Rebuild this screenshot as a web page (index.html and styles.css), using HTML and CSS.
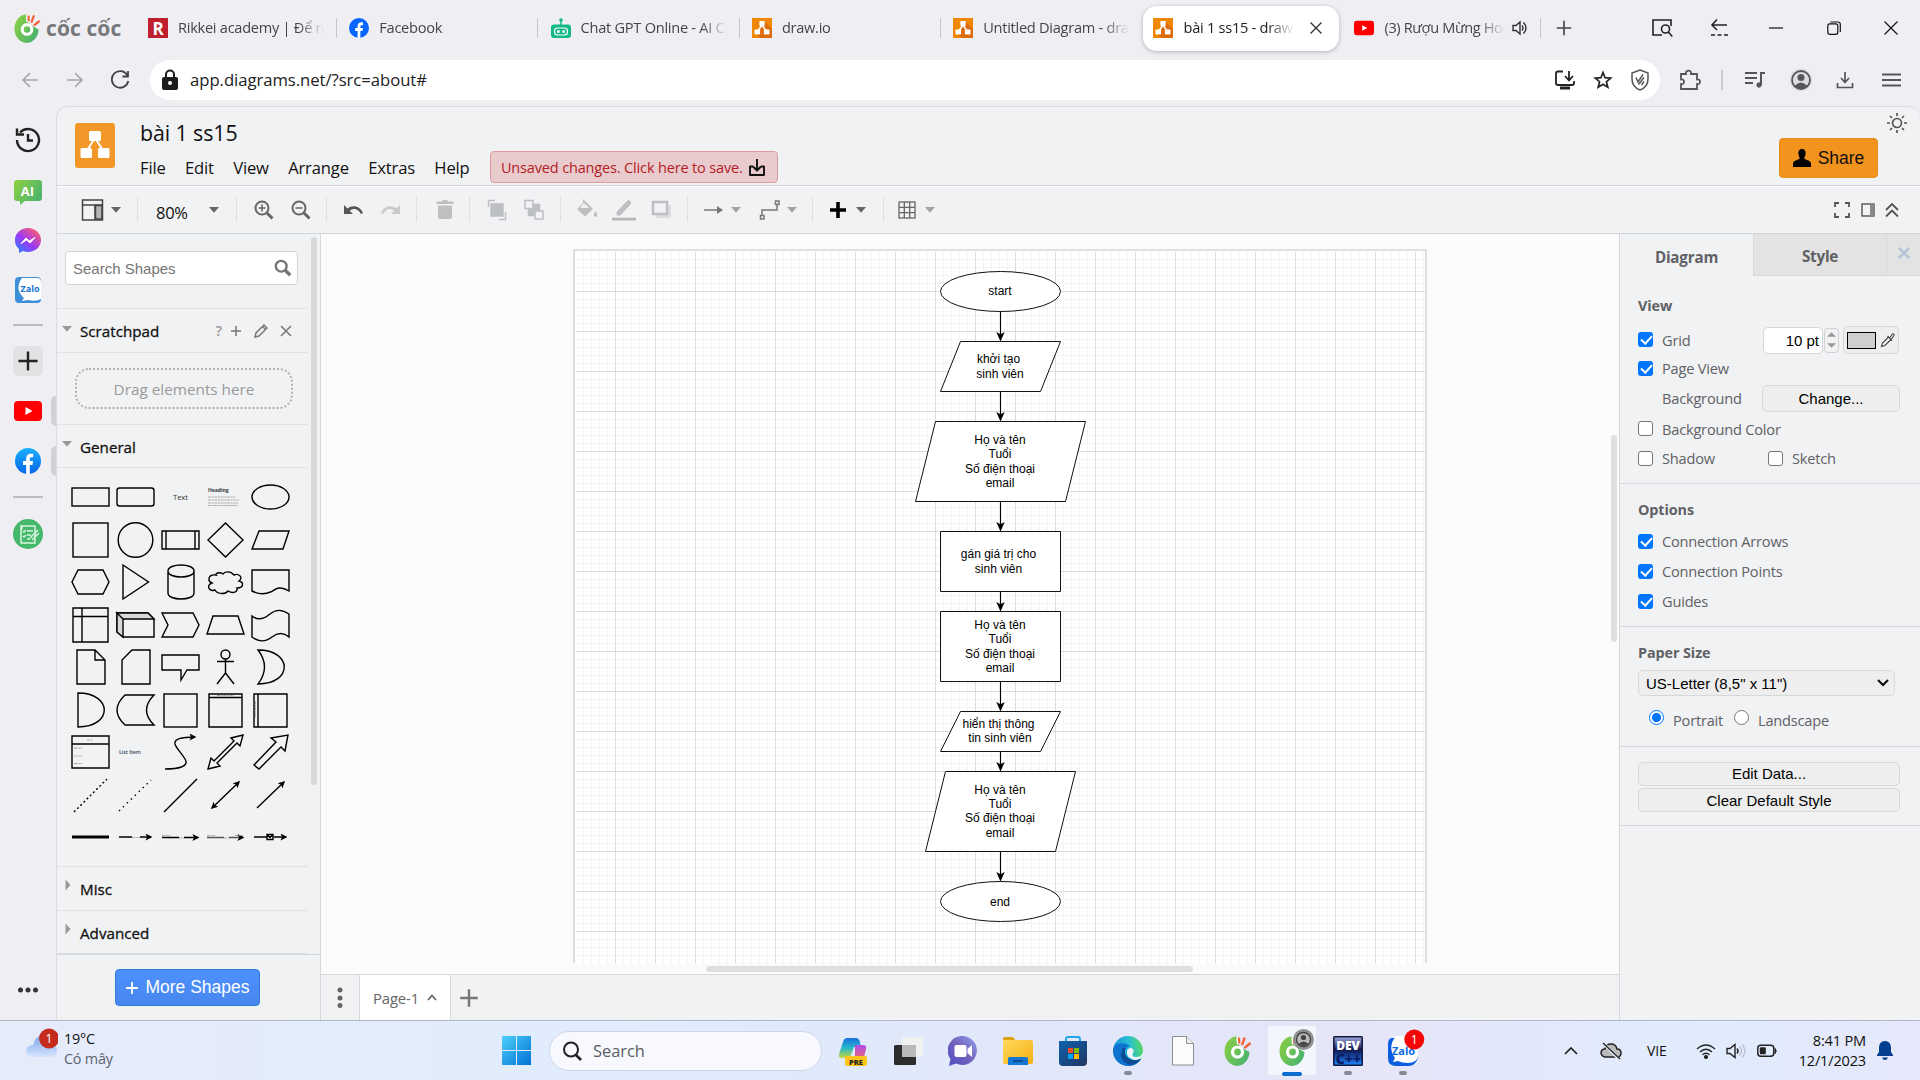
FILE: index.html
```html
<!DOCTYPE html>
<html lang="vi">
<head>
<meta charset="utf-8">
<title>bài 1 ss15 - draw.io</title>
<link rel="stylesheet" href="styles.css">
</head>
<body>
<svg class="defs" width="0" height="0" aria-hidden="true">
  <defs>
    <linearGradient id="gGreen" x1="0" y1="0" x2="1" y2="0.6"><stop offset="0" stop-color="#8fd040"/><stop offset="1" stop-color="#4bb56c"/></linearGradient>
    <linearGradient id="gMsg" x1="0" y1="1" x2="0.8" y2="0"><stop offset="0" stop-color="#1a8cff"/><stop offset="0.5" stop-color="#9b38f5"/><stop offset="1" stop-color="#ff5f70"/></linearGradient>
    <linearGradient id="gWin" x1="0" y1="0" x2="1" y2="1"><stop offset="0" stop-color="#4fd0fc"/><stop offset="1" stop-color="#0070d4"/></linearGradient>
    <linearGradient id="gFb" x1="0" y1="0" x2="0" y2="1"><stop offset="0" stop-color="#19b0ff"/><stop offset="1" stop-color="#0866e8"/></linearGradient>
    <linearGradient id="gCloud" x1="0" y1="0" x2="0" y2="1"><stop offset="0" stop-color="#7fa9ee"/><stop offset="1" stop-color="#d5e4fb"/></linearGradient>
    <linearGradient id="gEdge" x1="0" y1="0.2" x2="1" y2="0"><stop offset="0" stop-color="#1689d8"/><stop offset="0.5" stop-color="#28bfd6"/><stop offset="1" stop-color="#62dc4a"/></linearGradient>
    <linearGradient id="gFolder" x1="0" y1="0" x2="1" y2="1"><stop offset="0" stop-color="#ffd95e"/><stop offset="1" stop-color="#f6b010"/></linearGradient>
    <linearGradient id="gChat" x1="0" y1="1" x2="1" y2="0"><stop offset="0" stop-color="#4b4fc4"/><stop offset="0.5" stop-color="#7462bb"/><stop offset="1" stop-color="#8ea2f0"/></linearGradient>
    <linearGradient id="gStore" x1="0" y1="0" x2="1" y2="1"><stop offset="0" stop-color="#0c62ae"/><stop offset="1" stop-color="#233463"/></linearGradient>
    <linearGradient id="gCop1" x1="0" y1="0" x2="0" y2="1"><stop offset="0" stop-color="#1b6fe0"/><stop offset="0.5" stop-color="#25b8c8"/><stop offset="1" stop-color="#c9d83c"/></linearGradient>
    <linearGradient id="gCop2" x1="0" y1="0" x2="0" y2="1"><stop offset="0" stop-color="#b14df0"/><stop offset="1" stop-color="#f0685c"/></linearGradient>
    <linearGradient id="gDev" x1="0" y1="0" x2="0" y2="1"><stop offset="0" stop-color="#9aa4d8"/><stop offset="0.45" stop-color="#10164e"/><stop offset="1" stop-color="#1f7ff5"/></linearGradient>
    <symbol id="drawio" viewBox="0 0 20 20"><path d="M0 0H20V20H0z" fill="#f08705"/><path d="M12.5 3.5 20 11V20H8.500L4 15.500z" fill="#df6c0c"/><path d="M10 7 5.500 13.500M10 7l4.500 6.500" stroke="#fff" stroke-width="1.500"/><rect x="7.300" y="3" width="5.400" height="5" rx=".8" fill="#fff"/><rect x="2.500" y="11.500" width="5.600" height="5" rx=".8" fill="#fff"/><rect x="11.900" y="11.500" width="5.600" height="5" rx=".8" fill="#fff"/></symbol>
    <symbol id="youtube" viewBox="0 0 28 20"><rect width="28" height="20" rx="4" fill="#f00"/><path d="M11.500 6v8l7-4z" fill="#fff"/></symbol>
    <symbol id="facebook" viewBox="0 0 24 24"><circle cx="12" cy="12" r="12" fill="inherit"/><path d="M10.300 24v-8.300H7.400V12h2.900v-1.700c0-3.700 1.800-5.100 4.500-5.100.9 0 1.500.1 2 .2v3.200h-1.400c-1.400 0-1.800.6-1.800 1.800V12h3.100l-.6 3.700h-2.500V24z" fill="#fff"/></symbol>
    <symbol id="coccoc" viewBox="0 0 28 32"><path d="M13 1.500A12.500 14.700 0 1 0 25.500 17L20 14 14 9z" fill="url(#gGreen)"/><circle cx="13.500" cy="17" r="5" fill="url(#gGreen)" stroke="#fff" stroke-width="3.200"/><path d="M14.300 2 14.800 9" stroke="#fff" stroke-width="4"/><path d="M15 2.500 15.300 8.500M20.800 2.500 18 10M26.500 8 20.500 13" stroke="#f4623a" stroke-width="2.300"/></symbol>
    <symbol id="caret" viewBox="0 0 12 8"><path d="M1 1h10L6 6.800z" fill="currentColor"/></symbol>
    <symbol id="plus" viewBox="0 0 20 20"><path d="M10 2v16M2 10h16" stroke="currentColor" fill="none" stroke-width="inherit"/></symbol>
    <symbol id="search" viewBox="0 0 20 20"><circle cx="8" cy="8" r="6" fill="none" stroke="currentColor" stroke-width="2.600"/><path d="m12.500 12.500 5.500 5.500" stroke="currentColor" stroke-width="3.800"/></symbol>
    <symbol id="zalo" viewBox="0 0 28 28"><rect x="1" y="1" width="26" height="26" rx="4" fill="#3d8fd8"/><path d="M8 2h15q4 0 4 4v17q-5 3-13 1l-6 1 2-3Q0 13 8 2z" fill="#fff"/></symbol>
    <marker id="arrow" viewBox="0 0 10 10" refX="8.500" refY="5" markerWidth="10" markerHeight="10" markerUnits="userSpaceOnUse" orient="auto"><path d="M0 .8 9.500 5 0 9.200 2.200 5z"/></marker>
    <marker id="arrowS" viewBox="0 0 10 10" refX="8" refY="5" markerWidth="7" markerHeight="7" markerUnits="userSpaceOnUse" orient="auto-start-reverse"><path d="M0 0 10 5 0 10 2.500 5z"/></marker>
  </defs>
</svg>

<header class="tabstrip">
  <div class="brand">
    <svg width="27" height="31"><use href="#coccoc"/></svg>
    <span class="brand-name">cốc cốc</span>
  </div>
  <div class="tab"><svg class="fav" viewBox="0 0 20 20"><rect width="20" height="20" fill="#bd1f2d"/><text x="10" y="16.500" text-anchor="middle" class="fav-r">R</text></svg><span class="tab-title">Rikkei academy | Để nuôi</span></div>
  <div class="tab"><svg class="fav fb-flat"><use href="#facebook"/></svg><span class="tab-title">Facebook</span></div>
  <div class="tab"><svg class="fav" viewBox="0 0 20 20"><path d="M10 3v5" stroke="#12b886" stroke-width="1.500"/><circle cx="10" cy="2" r="1.800" fill="#12b886"/><rect y="6.500" width="20" height="13.500" rx="3" fill="#12b886"/><rect x="3.500" y="10" width="13" height="7" rx="3" fill="none" stroke="#fff" stroke-width="1.200"/><circle cx="7.300" cy="13.400" r="1.500" fill="#fff"/><circle cx="12.700" cy="13.400" r="1.500" fill="#fff"/></svg><span class="tab-title">Chat GPT Online - AI Chat</span></div>
  <div class="tab"><svg class="fav"><use href="#drawio"/></svg><span class="tab-title">draw.io</span></div>
  <div class="tab no-sep"><svg class="fav"><use href="#drawio"/></svg><span class="tab-title">Untitled Diagram - draw.io</span></div>
  <div class="tab active"><svg class="fav"><use href="#drawio"/></svg><span class="tab-title">bài 1 ss15 - draw.io</span><svg class="tab-close" width="14" height="14" viewBox="0 0 14 14"><path d="m1.500 1.500 11 11m0-11-11 11" stroke="#333" stroke-width="1.400"/></svg></div>
  <div class="tab last"><svg class="fav" ><use href="#youtube"/></svg><span class="tab-title">(3) Rượu Mừng Hoá</span><svg width="16" height="16" viewBox="0 0 16 16" fill="none" stroke="#333" stroke-width="1.400"><path d="M1 5.500h3L8 2v12l-4-3.500H1zM10 5.500q2 2.500 0 5M11.500 2.500q5 5.500 0 11"/></svg></div>
  <svg class="newtab" width="18" height="18"><use href="#plus"/></svg>
  <div class="winctl">
    <svg width="24" height="24" viewBox="0 0 24 24" fill="none" stroke="#222" stroke-width="1.600"><path d="M12 19H3V4h18v6"/><circle cx="15.500" cy="13" r="4"/><path d="m18.300 16 4 4.500"/></svg>
    <svg width="20" height="20" viewBox="0 0 20 20" fill="none" stroke="#222" stroke-width="1.600"><path d="M18 7H3m5-5.500L3 7l5 5"/><path d="M2 17h17" stroke-dasharray="4 2.500"/></svg>
    <svg width="14" height="14" viewBox="0 0 14 14"><path d="M0 7h14" stroke="#111" stroke-width="1.200"/></svg>
    <svg width="14" height="14" viewBox="0 0 14 14" fill="none" stroke="#111" stroke-width="1.200"><rect x=".8" y="2.800" width="10" height="10.500" rx="2"/><path d="M3.500 1H11q2.300 0 2.300 2.300V11"/></svg>
    <svg width="14" height="14" viewBox="0 0 14 14"><path d="m.5.5 13 13m0-13-13 13" stroke="#111" stroke-width="1.200"/></svg>
  </div>
</header>

<nav class="addressbar">
  <svg width="18" height="18" viewBox="0 0 18 18" class="nav-dim"><path d="M17 9H2m7-7L2 9l7 7"/></svg>
  <svg width="18" height="18" viewBox="0 0 18 18" class="nav-dim"><path d="M1 9h15M9 2l7 7-7 7"/></svg>
  <svg width="20" height="20" viewBox="0 0 20 20" class="nav-dark"><path d="M17.500 5.500A8.300 8.300 0 1 0 18.300 11M18 1v5.500h-5.500"/></svg>
  <div class="omnibox">
    <svg width="18" height="22" viewBox="0 0 18 22"><rect x="1" y="8" width="16" height="13" rx="2" fill="#1d1d20"/><path d="M5 8V5.500a4 4 0 0 1 8 0V8" fill="none" stroke="#1d1d20" stroke-width="2"/><circle cx="9" cy="14" r="2" fill="#fff"/></svg>
    <span class="url">app.diagrams.net/?src=about#</span>
    <svg width="22" height="20" viewBox="0 0 22 20" fill="none" stroke="#222" stroke-width="1.800"><path d="M9 1.500H4q-2 0-2 2V13q0 2 2 2h14q2 0 2-2v-2M15 1v9m-4-4 4 4.500L19 6"/><path d="M6 18h10" stroke-width="3"/></svg>
    <svg width="20" height="20" viewBox="0 0 20 20"><path d="m10 2.500 2.100 5.200 5.600.4-4.300 3.600 1.400 5.500L10 14.200l-4.800 3 1.400-5.500-4.300-3.600 5.600-.4z" fill="none" stroke="#222" stroke-width="1.700"/></svg>
    <svg width="20" height="22" viewBox="0 0 20 22" fill="none" stroke="#555" stroke-width="1.500"><path d="m10 1 8 3v6c0 6-4 9.500-8 11-4-1.500-8-5-8-11V4z"/><path d="m6 8.500 2 4.500 5-7.500M8.500 15.500l5.500-7M11.500 16l2.500-3.500"/></svg>
  </div>
  <div class="ext">
    <svg width="22" height="22" viewBox="0 0 22 22" fill="none" stroke="#55565c" stroke-width="1.800"><path d="M2 5h5c-1-4.500 6-4.500 5 0h6v5.500c4-1 4 5.500 0 4.500v5H2v-5c4 1 4-5.500 0-4.500z"/></svg>
    <i class="ext-sep"></i>
    <svg width="20" height="18" viewBox="0 0 20 18" fill="none" stroke="#55565c" stroke-width="2"><path d="M0 2h12M0 7h12M0 12h8M16 14V2h4"/><circle cx="14" cy="14" r="2.200" fill="#55565c" stroke-width="1"/></svg>
    <svg width="24" height="24" viewBox="0 0 24 24"><circle cx="12" cy="12" r="11.500" fill="#e3e3e7"/><circle cx="12" cy="12" r="9" fill="#dcdce2" stroke="#55565c" stroke-width="1.800"/><circle cx="12" cy="9.500" r="3.500" fill="#55565c"/><path d="M5.500 18q6.500-7 13 0-6.500 6-13 0" fill="#55565c"/></svg>
    <svg width="18" height="18" viewBox="0 0 18 18" fill="none" stroke="#55565c" stroke-width="1.700"><path d="M9 1v10M5 7l4 4.500L13 7M1.500 12v4.500h15V12"/></svg>
    <svg width="19" height="14" viewBox="0 0 19 14"><path d="M0 1.500h19M0 7h19M0 12.500h19" stroke="#55565c" stroke-width="2"/></svg>
  </div>
</nav>

<div class="workspace">
  <aside class="rail">
    <svg width="28" height="28" viewBox="0 0 28 28" fill="none" stroke="#222" stroke-width="2.400"><path d="M6 6.500A11 11 0 1 1 3 14M3 2.500v6h7M14 8v6.500h5"/></svg>
    <svg width="28" height="26" viewBox="0 0 28 26"><path d="M3 0h22q3 0 3 3v15q0 3-3 3H11l-5 4v-4H3q-3 0-3-3V3q0-3 3-3z" fill="url(#gGreen)"/><text x="13.500" y="15.500" text-anchor="middle" class="ai">AI</text></svg>
    <svg width="26" height="26" viewBox="0 0 26 26"><path d="M13 0c7 0 13 5 13 12s-6 12-13 12q-3 0-5-1l-4 2v-4Q0 18 0 12C0 5 6 0 13 0z" fill="url(#gMsg)"/><path d="m6 15.500 5-5.500 3.500 3L20 9.500 15 15l-3.500-3z" fill="#fff" stroke="#fff"/></svg>
    <svg width="28" height="28" viewBox="0 0 28 28"><use href="#zalo"/><text x="16" y="16" text-anchor="middle" class="zalo-s">Zalo</text></svg>
    <i class="rule"></i>
    <span class="add"><svg width="24" height="24"><use href="#plus"/></svg></span>
    <svg width="28" height="20"><use href="#youtube"/></svg>
    <svg width="26" height="26" class="fb-grad"><use href="#facebook"/></svg>
    <i class="rule"></i>
    <svg width="30" height="30" viewBox="0 0 30 30"><circle cx="15" cy="15" r="15" fill="#45b86b"/><path d="M8 7h14v17H8zM17 19l8-8m-6 10 7-7M8 7q2 2 0 4M14 12h6M14 16h4M14 20h3M10 12l1 1 2-2M10 17l1 1 2-2" fill="none" stroke="#d9f5df" stroke-width="1.500"/></svg>
    <span></span>
    <svg width="22" height="6" viewBox="0 0 22 6" fill="#333"><circle cx="3.500" cy="3" r="2.500"/><circle cx="11" cy="3" r="2.500"/><circle cx="18.500" cy="3" r="2.500"/></svg>
    <b class="pin pin-a"></b><b class="pin pin-b"></b>
  </aside>

  <main class="app">
    <div class="apphead">
      <svg class="applogo" width="40" height="45" viewBox="0 0 40 45"><rect width="40" height="45" rx="3" fill="#f29728"/><path d="m20 15-9 14m9-14 9 14" stroke="#fff" stroke-width="2"/><rect x="14" y="8" width="12" height="10" rx="1.500" fill="#fff"/><rect x="5.500" y="25" width="11.500" height="10" rx="1.500" fill="#fff"/><rect x="23" y="25" width="11.500" height="10" rx="1.500" fill="#fff"/></svg>
      <div class="headmain">
        <div class="doctitle">bài 1 ss15</div>
        <div class="menus">
          <span>File</span><span>Edit</span><span>View</span><span>Arrange</span><span>Extras</span><span>Help</span>
          <div class="unsaved"><span>Unsaved changes. Click here to save.</span><svg width="16" height="17" viewBox="0 0 16 17" fill="none" stroke="#111" stroke-width="1.900"><path d="M8 0v11M4 7.500 8 11.500l4-4M4 7.500H1V16h14V7.500h-3" stroke-linejoin="round"/></svg></div>
        </div>
      </div>
      <div class="headright">
        <svg width="22" height="22" viewBox="0 0 22 22" fill="none" stroke="#555" stroke-width="1.700"><circle cx="11" cy="11" r="4.500"/><path d="M11 1v3M11 18v3M1 11h3M18 11h3M4 4l2 2M16 16l2 2M4 18l2-2M16 6l2-2"/></svg>
        <div class="share"><svg width="18" height="18" viewBox="0 0 18 18"><path d="M9 0c3 0 4 2.500 3.500 5.500-.3 2-1.200 2.800-1.200 4 0 1 6.700 2 6.700 5V18H0v-3.500c0-3 6.700-4 6.700-5 0-1.200-.9-2-1.200-4C5 2.500 6 0 9 0z"/></svg><span>Share</span></div>
      </div>
    </div>

    <div class="toolbar">
      <div class="tg ga"><svg class="ic" viewBox="0 0 24 24" fill="none" stroke="#444" stroke-width="1.500"><path d="M14.500 7.500h6.500v13.500h-6.500z" fill="#b4b4b4"/><rect x="1.500" y="2" width="20" height="20"/><path d="M1.500 7h20M14 7v15"/></svg><svg class="ct"><use href="#caret"/></svg></div>
      <div class="tg gb"><span class="zoomv">80%</span><svg class="ct"><use href="#caret"/></svg></div>
      <div class="tg gc">
        <svg class="ic" viewBox="0 0 24 24" fill="none" stroke="#666" stroke-width="2"><circle cx="10" cy="10" r="6.500"/><path d="M10 6.500v7M6.500 10h7" stroke-width="1.600"/><path d="m15 15 5.500 5.500" stroke-width="3"/></svg>
        <svg class="ic" viewBox="0 0 24 24" fill="none" stroke="#666" stroke-width="2"><circle cx="10" cy="10" r="6.500"/><path d="M6.500 10h7" stroke-width="1.600"/><path d="m15 15 5.500 5.500" stroke-width="3"/></svg></div>
      <div class="tg gd">
        <svg class="ic" viewBox="0 0 24 24"><path d="M3 7v9h9l-3.300-3.300c4-3 8-2.500 11.300 3.300l2-1C19.500 8.500 12 6 6.500 10.500z" fill="#555"/></svg>
        <svg class="ic" viewBox="0 0 24 24"><path d="M21 7v9h-9l3.300-3.300c-4-3-8-2.500-11.300 3.300l-2-1C4.500 8.500 12 6 17.500 10.500z" fill="#c8cacc"/></svg></div>
      <div class="tg ge"><svg class="ic" viewBox="0 0 24 24" fill="#bdbfc1"><path d="M3.500 3.500H9l1-1.500h4l1 1.500h5.500V6h-17zM5 7.500h14V19q0 2-2 2H7q-2 0-2-2z"/></svg></div>
      <div class="tg gf">
        <svg class="ic" viewBox="0 0 24 24" fill="none" stroke="#bdbfc1" stroke-width="1.500"><path d="M6 6h12v12H6z" fill="#bdbfc1"/><path d="M3.500 9V2.500H10M20.500 14v7.500H14"/></svg>
        <svg class="ic" viewBox="0 0 24 24" fill="none" stroke="#bdbfc1" stroke-width="1.500"><path d="M6.500 6.500h11v11h-11z" fill="#bdbfc1"/><rect x="3" y="2.500" width="8" height="8" fill="#f1f2f4"/><rect x="13" y="13" width="8" height="8" fill="#f1f2f4"/></svg></div>
      <div class="tg gg">
        <svg class="ic" viewBox="0 0 24 24"><path d="M8 1 18 11l-8 7.500L2 11l6-5.500zM20.500 13q3.500 5 0 6-3.500-1 0-6z" fill="#bdbfc1"/><path d="m9 5 5 5H5z" fill="#f1f2f4"/></svg>
        <svg class="ic" viewBox="0 0 26 24"><path d="M5 18v-4L16 2.500q2-2 4 0 1.500 1.500 0 3.500L9 18z" fill="#bdbfc1"/><path d="M0 22h26" stroke="#b5b5b5" stroke-width="3"/></svg>
        <svg class="ic" viewBox="0 0 24 24" fill="none" stroke-width="2.500"><path d="M7 7h15v13H7z" fill="#dcdddf"/><rect x="4" y="4" width="14" height="12" stroke="#bdbfc1" fill="#f1f2f4"/></svg></div>
      <div class="tg gh">
        <svg class="ic" viewBox="0 0 24 24"><path d="M2 12h16" stroke="#777" stroke-width="1.700"/><path d="m15 8 6 4-6 4z" fill="#777"/></svg><svg class="ct dim"><use href="#caret"/></svg>
        <svg class="ic wp" viewBox="0 0 24 24" fill="none" stroke="#777" stroke-width="1.500"><path d="M4 18v-6h15V6"/><rect x="2.500" y="17.500" width="3.500" height="3.500"/><rect x="17.500" y="3" width="3.500" height="3.500"/></svg><svg class="ct dim"><use href="#caret"/></svg></div>
      <div class="tg gi"><svg class="ic" viewBox="0 0 24 24"><path d="M12 4v16M4 12h16" stroke="#000" stroke-width="3.600"/></svg><svg class="ct"><use href="#caret"/></svg></div>
      <div class="tg gj"><svg class="ic" viewBox="0 0 24 24" fill="none" stroke="#666" stroke-width="1.300"><rect x="4" y="4" width="16" height="16"/><path d="M4 9.300h16M4 14.700h16M9.300 4v16M14.700 4v16"/></svg><svg class="ct dim"><use href="#caret"/></svg></div>
      <div class="tgr">
        <svg width="16" height="16" viewBox="0 0 16 16" fill="none" stroke="#555" stroke-width="1.800"><path d="M1 5V1h4M11 1h4v4M15 11v4h-4M5 15H1v-4"/></svg>
        <svg width="14" height="16" viewBox="0 0 14 16"><rect x="1" y="2" width="12" height="12" fill="none" stroke="#555" stroke-width="1.400"/><path d="M9 2h4v12H9z" fill="#888"/></svg>
        <svg width="14" height="16" viewBox="0 0 14 16" fill="none" stroke="#555" stroke-width="1.800"><path d="m1 8 6-6 6 6M1 14.500l6-6 6 6"/></svg>
      </div>
    </div>

    <div class="body">
      <section class="shapes">
        <div class="shapes-scroll">
          <div class="searchrow"><div class="searchbox"><span>Search Shapes</span><svg width="18" height="18"><use href="#search"/></svg></div></div>
          <div class="sec"><svg class="tri" width="12" height="8"><use href="#caret"/></svg><span class="sec-t">Scratchpad</span>
            <span class="sec-tools"><b>?</b><svg width="12" height="12" viewBox="0 0 12 12"><path d="M6 1v10M1 6h10"/></svg><svg width="14" height="14" viewBox="0 0 14 14"><path d="m1 13 1-4 8-8 3 3-8 8zM8.500 2.500l3 3"/></svg><svg width="12" height="12" viewBox="0 0 12 12"><path d="m1 1 10 10M11 1 1 11"/></svg></span></div>
          <div class="dragwrap"><div class="drag">Drag elements here</div></div>
          <div class="sec gen"><svg class="tri" width="12" height="8"><use href="#caret"/></svg><span class="sec-t">General</span></div>
          <div class="palette">
            <svg viewBox="-22 -21 45 42"><rect x="-18" y="-9" width="37" height="18"/></svg>
            <svg viewBox="-22 -21 45 42"><rect x="-18" y="-9" width="37" height="18" rx="2.500"/></svg>
            <svg viewBox="-22 -21 45 42"><text x="0.500" y="3" class="t7" text-anchor="middle">Text</text></svg>
            <svg viewBox="-22 -21 45 42"><text x="-17" y="-5" class="t5">Heading</text><path d="M-17 0h27M-17 3h31M-17 6h30M-17 8.500h30" class="greek"/></svg>
            <svg viewBox="-22 -21 45 42"><ellipse cx=".5" rx="18.500" ry="12"/></svg>

            <svg viewBox="-22 -21 45 42"><rect x="-17" y="-17" width="35" height="34"/></svg>
            <svg viewBox="-22 -21 45 42"><circle cx=".5" r="17.300"/></svg>
            <svg viewBox="-22 -21 45 42"><path d="M-18-9h37V9h-37zM-14-9V9M15-9V9"/></svg>
            <svg viewBox="-22 -21 45 42"><path d="M.5-17 18 0 .5 17-17 0z"/></svg>
            <svg viewBox="-22 -21 45 42"><path d="M-11-9h30L13 9h-31z"/></svg>

            <svg viewBox="-22 -21 45 42"><path d="M-12-12h25L19 0l-6 12h-25L-18 0z"/></svg>
            <svg viewBox="-22 -21 45 42"><path d="M-12-17 13.500 0-12 17z"/></svg>
            <svg viewBox="-22 -21 45 42"><path d="M-12-11v22c0 8 26 8 26 0v-22c0-8-26-8-26 0s26 8 26 0"/></svg>
            <svg viewBox="-22 -21 45 42"><path d="M-9-7C-17-8-18-1-13 1c-7 3-2 9 3 7 3 5 11 4 13 1 5 3 10 1 9-3C19 6 19 0 14-1c5-4-1-8-5-6-4-5-10-3-11-1-4-3-8 0-7 1z"/></svg>
            <svg viewBox="-22 -21 45 42"><path d="M-18-12h37V9C8 2 4 9 .5 10-6 13-12 12-18 9z"/></svg>

            <svg viewBox="-22 -21 45 42"><path d="M-17-17h35v34h-35zM-8-17v34M-17-8.500h35"/></svg>
            <svg viewBox="-22 -21 45 42"><path d="M-18-12h31l6 6v18h-31l-6-5z"/><path d="M-18-12l6 6v18l-6-5zM-18-12h31l6 6h-31z" fill="#d8d9db"/></svg>
            <svg viewBox="-22 -21 45 42"><path d="M-18-12h31L19 0l-6 12h-31l6-12z"/></svg>
            <svg viewBox="-22 -21 45 42"><path d="M-12-9h25l6 18h-37z"/></svg>
            <svg viewBox="-22 -21 45 42"><path d="M-18-9c6 5 12 3 18-2s12-5 19 0V12C13 7 7 8 2 12s-12 6-20 0z"/></svg>

            <svg viewBox="-22 -21 45 42"><path d="M-13-17H5l10 10v24h-28zM5-17V-7h10"/></svg>
            <svg viewBox="-22 -21 45 42"><path d="M-3-17h18v34h-28V-7z"/></svg>
            <svg viewBox="-22 -21 45 42"><path d="M-18-12h37V3H7L1 13V3h-19z"/></svg>
            <svg viewBox="-22 -21 45 42"><circle cx=".5" cy="-12.500" r="4.500"/><path d="M.5-8V6M-8-5.500H9M-8 17 .5 6 9 17"/></svg>
            <svg viewBox="-22 -21 45 42"><path d="M-12-17c35 0 35 34 0 34q13-17 0-34z"/></svg>

            <svg viewBox="-22 -21 45 42"><path d="M-12-17c35 0 35 34 0 34z"/></svg>
            <svg viewBox="-22 -21 45 42"><path d="M-10-15h29q-15 15 0 30h-29q-16-15 0-30z"/></svg>
            <svg viewBox="-22 -21 45 42"><rect x="-16" y="-16" width="33" height="33"/></svg>
            <svg viewBox="-22 -21 45 42"><path d="M-16-16h33v33h-33zM-16-12.500h33"/><path d="M-8-14.500H9" class="greek"/></svg>
            <svg viewBox="-22 -21 45 42"><path d="M-16-16h33v33h-33zM-12-16v33"/><path d="M-14.500-9v17" class="greek"/></svg>

            <svg viewBox="-22 -21 45 42"><path d="M-18-16h37v32h-37zM-18-8h37"/><path d="M-3-12h6M-16-4h8M-16 4h8M-16 11.500h8" class="greek"/></svg>
            <svg viewBox="-22 -21 45 42"><text x="-16" y="1.500" class="t5 li">List Item</text></svg>
            <svg viewBox="-22 -21 45 42"><path d="M-15 17c12 0 25-2 20-10C0-1-4-4-5-8c-1-5 6-7 20-7" marker-end="url(#arrowS)"/></svg>
            <svg viewBox="-22 -21 45 42"><path d="m18-17-3 11-3-3-20 20 3 3-12 3 3-11 3 3L9-11l-3-3z"/></svg>
            <svg viewBox="-22 -21 45 42"><path d="m18-17-3 16-4-4-22 22-5-4L6-10l-5-4z"/></svg>

            <svg viewBox="-22 -21 45 42"><path d="m-16 17 33-33" stroke-dasharray="2 2.500"/></svg>
            <svg viewBox="-22 -21 45 42"><path d="m-16 16 32-31" stroke-dasharray="1.500 4"/></svg>
            <svg viewBox="-22 -21 45 42"><path d="m-16 17 33-33"/></svg>
            <svg viewBox="-22 -21 45 42"><path d="m-13 13 27-26" marker-start="url(#arrowS)" marker-end="url(#arrowS)"/></svg>
            <svg viewBox="-22 -21 45 42"><path d="m-13 13 27-26" marker-end="url(#arrowS)"/></svg>

            <svg viewBox="-22 -21 45 42"><path d="M-18 0h37" stroke-width="3"/></svg>
            <svg viewBox="-22 -21 45 42"><path d="M-16 0h13M5 0h11" marker-end="url(#arrowS)"/><path d="M-3 0.500h8" class="greek"/></svg>
            <svg viewBox="-22 -21 45 42"><path d="M-18 .5h17M4 .5h14" marker-end="url(#arrowS)"/><path d="M-18-1.500h8M-1 1h5" class="greek"/></svg>
            <svg viewBox="-22 -21 45 42"><path d="M-18 .5h17M4 .5h14" stroke="#555" marker-end="url(#arrowS)"/><path d="M-18-1.500h8M-1 1h5M10-1.500h8" class="greek"/></svg>
            <svg viewBox="-22 -21 45 42"><path d="M-16 0h13M4 0h12" marker-end="url(#arrowS)"/><path d="M-3-2.500h6v5h-6zL0 .5l3-3"/></svg>
          </div>
          <div class="sec shut"><svg class="tri side" width="6" height="12" viewBox="0 0 6 12"><path d="M.5.500 5.500 6l-5 5.500z" fill="#999"/></svg><span class="sec-t">Misc</span></div>
          <div class="sec shut"><svg class="tri side" width="6" height="12" viewBox="0 0 6 12"><path d="M.5.500 5.500 6l-5 5.500z" fill="#999"/></svg><span class="sec-t">Advanced</span></div>
        </div>
        <div class="more"><div class="morebtn"><svg width="14" height="14" viewBox="0 0 14 14"><path d="M7 1v12M1 7h12" stroke="#fff" stroke-width="1.800"/></svg><span>More Shapes</span></div></div>
        <b class="vbar"></b>
      </section>

      <section class="center">
        <div class="canvas">
          <svg class="board" width="1290" height="729" viewBox="321 234 1290 729">
            <defs>
              <pattern id="minor" x="575" y="251" width="8" height="8" patternUnits="userSpaceOnUse"><path d="M0 .5h8M.5 0v8" stroke="#f4f4f4" stroke-width="1"/></pattern>
              <pattern id="major" x="575" y="251" width="40" height="40" patternUnits="userSpaceOnUse"><path d="M0 .5h40M.5 0v40" stroke="#dcdcdc" stroke-width="1"/></pattern>
            </defs>
            <rect x="574" y="250" width="852" height="730" fill="#fff" stroke="#dfdfdf" stroke-width="2"/>
            <rect x="576" y="252" width="849" height="720" fill="url(#minor)"/>
            <rect x="576" y="252" width="849" height="720" fill="url(#major)"/>
            <g class="node">
              <ellipse cx="1000.500" cy="291.500" rx="60" ry="20"/>
              <path d="M960.500 341.500h100l-20 50h-100z"/>
              <path d="M935.500 421.500h150l-20 80h-150z"/>
              <path d="M940.500 531.500h120v60h-120z"/>
              <path d="M940.500 611.500h120v70h-120z"/>
              <path d="M960.500 711.500h100l-20 40h-100z"/>
              <path d="M945.500 771.500h130l-20 80h-130z"/>
              <ellipse cx="1000.500" cy="901.500" rx="60" ry="20"/>
            </g>
            <g class="edge">
              <path d="M1000.500 311.500v29"/><path d="M1000.500 391.500v29"/><path d="M1000.500 501.500v29"/><path d="M1000.500 591.500v19"/><path d="M1000.500 681.500v29"/><path d="M1000.500 751.500v19"/><path d="M1000.500 851.500v29"/>
            </g>
            <g class="label">
              <text x="1000" y="295">start</text>
              <text x="998.500" y="363">khởi tạo</text><text x="1000" y="378">sinh viên</text>
              <text x="1000" y="444">Họ và tên</text><text x="1000" y="458">Tuổi</text><text x="1000" y="473">Số điện thoại</text><text x="1000" y="487">email</text>
              <text x="998.500" y="558">gán giá trị cho</text><text x="998.500" y="573">sinh viên</text>
              <text x="1000" y="629">Họ và tên</text><text x="1000" y="643">Tuổi</text><text x="1000" y="658">Số điện thoại</text><text x="1000" y="672">email</text>
              <text x="998.500" y="728">hiển thị thông</text><text x="1000" y="742">tin sinh viên</text>
              <text x="1000" y="794">Họ và tên</text><text x="1000" y="808">Tuổi</text><text x="1000" y="822">Số điện thoại</text><text x="1000" y="837">email</text>
              <text x="1000" y="906">end</text>
            </g>
          </svg>
          <b class="cv"></b><b class="ch"></b>
        </div>
        <div class="pages">
          <div class="pdots"><svg width="6" height="22" viewBox="0 0 6 22" fill="#666"><circle cx="3" cy="3" r="2.500"/><circle cx="3" cy="11" r="2.500"/><circle cx="3" cy="18.500" r="2.500"/></svg></div>
          <div class="ptab"><span>Page-1</span><svg width="10" height="7" viewBox="0 0 10 7"><path d="m1 6 4-4.500L9 6" fill="none" stroke="#666" stroke-width="1.800"/></svg></div>
          <svg class="padd" width="22" height="22"><use href="#plus"/></svg>
        </div>
      </section>

      <section class="format">
        <div class="ftabs"><div class="ft on">Diagram</div><div class="ft st">Style</div><div class="ft x"><svg width="12" height="12" viewBox="0 0 12 12"><path d="m1 1 10 10M11 1 1 11" stroke="#b4c3d6" stroke-width="2.600"/></svg></div></div>
        <div class="fs view">
          <h3>View</h3>
          <div class="row r30"><i class="cb on"></i><span class="lb grid-lb">Grid</span>
            <span class="num">10 pt</span><span class="step"><svg width="11" height="8" viewBox="0 0 12 8"><path d="M1 7h10L6 2z" fill="#999"/></svg><svg width="11" height="8" viewBox="0 0 12 8"><path d="M1 1h10L6 6z" fill="#999"/></svg></span>
            <span class="color"><i></i><svg width="15" height="16" viewBox="0 0 15 16" fill="none" stroke="#444" stroke-width="1.100"><path d="m1.500 14.500 1-3.500 6-6 2.500 2.500-6 6zM7.500 4l4.500 4.500M10 5.500 12.500 2q2-.5 1.500 1.500L11.500 7"/></svg></span></div>
          <div class="row r28"><i class="cb on"></i><span class="lb">Page View</span></div>
          <div class="row r32"><span class="lb ind">Background</span><span class="btn change">Change...</span></div>
          <div class="row r31"><i class="cb"></i><span class="lb">Background Color</span></div>
          <div class="row r28b"><i class="cb"></i><span class="lb half">Shadow</span><i class="cb"></i><span class="lb">Sketch</span></div>
        </div>
        <div class="fs opts">
          <h3>Options</h3>
          <div class="row r30"><i class="cb on"></i><span class="lb">Connection Arrows</span></div>
          <div class="row r30"><i class="cb on"></i><span class="lb">Connection Points</span></div>
          <div class="row r30"><i class="cb on"></i><span class="lb">Guides</span></div>
        </div>
        <div class="fs paper">
          <h3>Paper Size</h3>
          <div class="select"><span>US-Letter (8,5" x 11")</span><svg width="12" height="8" viewBox="0 0 12 8"><path d="m1 1 5 5 5-5" fill="none" stroke="#111" stroke-width="2.200"/></svg></div>
          <div class="radios"><i class="rd on"></i><span>Portrait</span><i class="rd"></i><span>Landscape</span></div>
        </div>
        <div class="fs data"><span class="btn wide">Edit Data...</span><span class="btn wide">Clear Default Style</span></div>
      </section>
    </div>
  </main>
</div>

<footer class="taskbar">
  <div class="weather">
    <svg width="34" height="34" viewBox="0 0 34 34"><path d="M8 29q-6-1-6-6 1-6 7-6 2-9 9-9 9 0 9 8 6 1 6 7 0 6-6 6z" fill="url(#gCloud)"/><circle cx="25" cy="10.500" r="10" fill="#c42b1c"/><text x="25" y="15" text-anchor="middle" class="badge">1</text></svg>
    <div class="wtext"><span>19°C</span><span class="dim2">Có mây</span></div>
  </div>
  <svg class="winlogo" width="29" height="29" viewBox="0 0 29 29"><path d="M0 0h14v14H0zM15 0h14v14H15zM0 15h14v14H0zM15 15h14v14H15z" fill="url(#gWin)"/></svg>
  <div class="tsearch"><svg width="20" height="20" viewBox="0 0 20 20" fill="none" stroke="#222" stroke-width="2"><circle cx="9" cy="8.500" r="7"/><path d="m14 14 5 5" stroke-width="2.600"/></svg><span>Search</span></div>
  <div class="apps">
    <div><svg width="30" height="30" viewBox="0 0 30 30"><path d="M9 2h9q3 0 4 4l1 5h-7l-3 8q-1 3-4 3H4q-4 0-3-4L5 6q1-4 4-4z" fill="url(#gCop1)"/><path d="M17 9h8q4 0 3 4l-2 8q-1 4-4 4H12q4-1 5-5z" fill="url(#gCop2)"/><rect x="7" y="20" width="22" height="10" rx="2" fill="#ffc61a"/><text x="18" y="28.500" text-anchor="middle" class="pre">PRE</text></svg></div>
    <div><svg width="30" height="30" viewBox="0 0 30 30"><rect x="1" y="9" width="22" height="20" rx="1.500" fill="#2c2c2c"/><rect x="9" y="1" width="21" height="20" rx="1.500" fill="#f1f1f1" fill-opacity=".95"/><path d="M9 9h14v12H9z" fill="#b9b9b9"/></svg></div>
    <div><svg width="30" height="30" viewBox="0 0 30 30"><path d="M15 0a14.500 14.500 0 1 1-7 27.500L1 30l1.500-7A14.500 14.500 0 0 1 15 0z" fill="url(#gChat)"/><rect x="6.500" y="9" width="12" height="12" rx="2" fill="#fff"/><path d="m19.500 13 4.500-4v12l-4.500-4z" fill="#fff"/></svg></div>
    <div><svg width="30" height="28" viewBox="0 0 30 28"><path d="M0 2q0-2 2-2h8l3 4H0z" fill="#e0a106"/><path d="M0 3h11l3 0h14q2 0 2 2v20q0 2-2 2H2q-2 0-2-2z" fill="url(#gFolder)"/><path d="M5 28v-6q0-2 2-2h16q2 0 2 2v6z" fill="#1477d3"/><path d="M10 24h10" stroke="#0b3f84" stroke-width="1.600"/></svg></div>
    <div><svg width="30" height="30" viewBox="0 0 30 30"><path d="M8 7V3q0-2 2-2h10q2 0 2 2v4" fill="none" stroke="#1fa9ea" stroke-width="2"/><path d="M1 5h28v21q0 4-4 4H5q-4 0-4-4z" fill="url(#gStore)"/><path d="M10 12h5v5h-5z" fill="#f25022"/><path d="M16 12h5v5h-5z" fill="#7fba00"/><path d="M10 18h5v5h-5z" fill="#00a4ef"/><path d="M16 18h5v5h-5z" fill="#ffb900"/></svg></div>
    <div class="run"><svg width="30" height="30" viewBox="0 0 30 30"><circle cx="15" cy="15" r="15" fill="url(#gEdge)"/><path d="M0 14C2 6 12 6 17 10q-6 1-5 8 2 9 16 5Q23 31 13 30 1 27 0 14z" fill="#0e72cf"/><path d="M10 12q-6 12 7 17 8-1 11-6-9 3-14-2-4-5-1-9z" fill="#0d4c95"/><path d="M14 16q0-4 4-4 4 1 2 5-2 4 3 4 6 0 7-5v3q-4 7-11 4-5-2-5-6z" fill="#eef3fb"/></svg></div>
    <div><svg width="22" height="30" viewBox="0 0 22 30"><path d="M.5.500h14l7 7V29H.5z" fill="#fbfbfb" stroke="#8d8d8d"/><path d="M14.500.500v7h7" fill="#eee" stroke="#8d8d8d"/></svg></div>
    <div><svg width="28" height="32"><use href="#coccoc"/></svg></div>
    <div class="run cur"><svg width="28" height="32"><use href="#coccoc"/></svg><svg class="who" width="21" height="21" viewBox="0 0 21 21"><circle cx="10.500" cy="10.500" r="10.500" fill="#8f9092"/><circle cx="10.500" cy="10.500" r="7" fill="#bbb" stroke="#444" stroke-width="1.400"/><circle cx="10.500" cy="8.500" r="2.600" fill="#444"/><path d="M5.500 15q5-5 10 0-5 4-10 0" fill="#444"/></svg></div>
    <div class="run"><svg width="30" height="30" viewBox="0 0 30 30"><rect width="30" height="30" rx="1.500" fill="#111a3e"/><rect x="1.500" y="1.500" width="27" height="27" fill="url(#gDev)"/><text x="15" y="14" text-anchor="middle" class="dev">DEV</text><text x="15.500" y="27.500" text-anchor="middle" class="cpp">C++</text></svg></div>
    <div class="run"><svg class="zicon" width="34" height="36" viewBox="0 0 34 36"><path d="M6 5h20q6 0 6 6v13q-2 9-10 9H10Q2 33 2 25V12q0-7 4-7z" fill="#0a5ce0"/><path d="M10 3h15q7 0 7 7v13q-1 7-10 7-6 0-10-2l-5 1 2-4Q1 14 10 3z" fill="#fff"/><text x="17.500" y="21.500" text-anchor="middle" class="zalo-t">Zalo</text><circle cx="28.300" cy="6.500" r="10" fill="#f50505"/><text x="28.300" y="11.300" text-anchor="middle" class="badge">1</text></svg></div>
  </div>
  <div class="tray">
    <svg width="14" height="8" viewBox="0 0 14 8"><path d="m1 7 6-6 6 6" fill="none" stroke="#222" stroke-width="1.700"/></svg>
    <svg width="22" height="18" viewBox="0 0 22 18"><path d="M5 15Q1 14 1 10.500 1.500 7 5 7q1-5 6-5 5 0 6 5 4 0 4 4t-4 4z" fill="#bbb" stroke="#222" stroke-width="1.500"/><path d="M3 1l16 16" stroke="#e3ecfb" stroke-width="3"/><path d="M3 1l17 16" stroke="#222" stroke-width="1.400"/></svg>
    <span class="vie">VIE</span>
    <svg width="20" height="16" viewBox="0 0 20 16" fill="none" stroke="#222" stroke-width="1.500"><path d="M1 6q9-8 18 0M4 9q6-5.500 12 0M6.500 11.700q3.500-3 7 0"/><circle cx="10" cy="14" r="1.300" fill="#222"/></svg>
    <svg width="21" height="16" viewBox="0 0 21 16" fill="none" stroke="#222" stroke-width="1.400"><path d="M1 5.500h3L9 1.500v13l-5-4H1zM11 5.500q2 2.500 0 5"/><path d="M13.500 3.500q4 4.500 0 9M16 1.500q6 6.500 0 13" stroke="#b9c1cf"/></svg>
    <svg width="20" height="14" viewBox="0 0 20 14"><rect x=".8" y="1.300" width="16" height="11" rx="3" fill="none" stroke="#222" stroke-width="1.500"/><rect x="2.800" y="3.300" width="6" height="7" rx="1" fill="#222"/><path d="M18.200 4.500q2 2.500 0 5z" fill="#222" stroke="#222"/></svg>
    <div class="clock"><span>8:41 PM</span><span>12/1/2023</span></div>
    <svg width="16" height="19" viewBox="0 0 16 19"><path d="M8 0c4 0 6 3 6 7v4l2 3v1H0v-1l2-3V7c0-4 2-7 6-7zM5 16.500h6q-1 2.500-3 2.500t-3-2.500z" fill="#053f8f"/></svg>
  </div>
</footer>
</body>
</html>
```
FILE: styles.css
```css
* { box-sizing: border-box; }
body {
  margin: 0;
  width: 1920px;
  height: 1080px;
  overflow: hidden;
  display: flex;
  flex-direction: column;
  background: #efeef3;
  font-family: "Open Sans", "Noto Sans", sans-serif;
  color: #111;
}
svg { display: block; flex: none; }
.defs { position: absolute; }

/* Browser tab strip */
.tabstrip { height: 56px; display: flex; align-items: center; flex: none; }
.brand { width: 138px; padding-left: 14px; display: flex; align-items: center; gap: 5px; flex: none; height: 56px; }
.brand-name { font: 700 21px/30px "Open Sans", sans-serif; color: #77787b; letter-spacing: 0.1px; }
.tab { width: 201.3px; height: 45px; display: flex; align-items: center; padding-left: 10px; flex: none; font-size: 14.6px; color: #454549; }
.tab::after { content: ""; width: 1px; height: 20px; background: #c4c4ca; margin-left: 12px; }
.tab.no-sep::after, .tab.active::after { display: none; }
.fav { width: 20px; height: 20px; margin-right: 10px; }
.fav-r { font: 700 17px "Open Sans", sans-serif; fill: #fff; }
.fb-flat { fill: #0866ff; }
.fb-grad { fill: url(#gFb); }
.tab-title { width: 146px; padding-bottom: 2px; white-space: nowrap; overflow: hidden; letter-spacing: -0.27px; mask-image: linear-gradient(90deg, #000 120px, transparent 146px); }
.tab.active { width: 196px; background: #fff; border-radius: 14px; box-shadow: 0 1px 4px rgba(0,0,0,.25); color: #222; margin: 0 5px 0 -1px; }
.tab.active .tab-title { width: 112px; mask-image: linear-gradient(90deg, #000 84px, transparent 112px); }
.tab-close { margin-left: 14px; }
.tab.last { width: 198px; }
.tab.last .tab-title { width: 121px; margin-right: 7px; letter-spacing: -0.38px; mask-image: linear-gradient(90deg, #000 94px, transparent 121px); }
.newtab { color: #444; margin-left: 13px; stroke-width: 1.8; }
.winctl { flex: 1; display: grid; grid-template-columns: 56px 57px 58px 57px 58px; justify-content: end; justify-items: center; align-items: center; }

/* Address bar */
.addressbar { height: 50px; display: flex; align-items: flex-start; padding-top: 4px; flex: none; }
.addressbar > svg { margin-top: 11px; }
.nav-dim { margin-left: 21px; fill: none; stroke: #a5a5aa; stroke-width: 1.6; }
.nav-dim + .nav-dim { margin-left: 27px; }
.addressbar > .nav-dark { margin: 10px 0 0 26px; fill: none; stroke: #444; stroke-width: 1.8; }
.omnibox { margin-left: 20px; width: 1510px; height: 40px; background: #fff; border-radius: 20px; display: flex; align-items: center; padding: 0 10px 0 11px; }
.url { flex: 1; padding: 0 0 2px 11px; font-size: 16.7px; letter-spacing: -0.05px; color: #222; }
.omnibox svg + svg { margin-left: 17px; }
.ext { flex: 1; height: 40px; display: grid; grid-template-columns: 60px 4px 62px 30px 58px 34px; align-items: center; justify-items: center; }
.ext-sep { width: 2px; height: 20px; background: #cbcbd0; }

/* Frame under the address bar */
.workspace { height: 914px; display: flex; flex: none; }
.rail { position: relative; width: 56px; display: grid; grid-template-rows: 67px 39px 58px 40px 30px 42px 58px 42px 30px 44px 1fr 61px; align-items: center; justify-items: center; }
.rule { width: 30px; height: 2px; background: #bdbdc1; }
.add { width: 30px; height: 30px; border-radius: 5px; background: #e2e2e5; display: grid; place-items: center; stroke-width: 2; color: #222; }
.ai { font: 700 13px "Open Sans", sans-serif; fill: #fff; }
.zalo-s { font: 700 9px "Open Sans", sans-serif; fill: #1a73d0; }
.pin { position: absolute; right: 0; width: 5px; height: 30px; background: #d2d2d6; border-radius: 5px 0 0 5px; }
.pin-a { top: 290px; }
.pin-b { top: 340px; }

.app { width: 1864px; background: #f1f2f4; border: 1px solid #dcdce0; border-right: 0; border-bottom: 0; border-radius: 12px 12px 0 0; display: flex; flex-direction: column; overflow: hidden; }
.apphead { height: 79px; display: flex; border-bottom: 1px solid #d2d5d9; flex: none; }
.applogo { margin: 16px 0 0 18px; }
.headmain { margin-left: 25px; flex: 1; }
.doctitle { font-size: 21.4px; line-height: 30px; margin-top: 11px; letter-spacing: -0.1px; }
.menus { display: flex; align-items: center; height: 32px; margin-top: 3px; font-size: 16.6px; gap: 19.3px; letter-spacing: -0.15px; }
.unsaved { margin-left: 1px; width: 288px; height: 32px; background: #eacbcd; border: 1px solid #dd9ba1; border-radius: 4px; display: flex; align-items: center; justify-content: space-between; padding: 0 12px 0 10px; font-size: 14.5px; color: #b3201f; letter-spacing: -0.15px; white-space: nowrap; }
.headright { width: 150px; display: flex; flex-direction: column; align-items: flex-end; }
.headright > svg { margin: 5px 12px 4px 0; }
.share { width: 99px; height: 40px; margin-right: 42px; background: #f2931e; border: 1px solid #e88c15; border-radius: 4px; display: flex; align-items: center; justify-content: center; gap: 7px; font: 17.5px "Liberation Sans", Arial, sans-serif; }

/* Editor toolbar */
.toolbar { height: 48px; display: flex; align-items: center; border-top: 1px solid #fff; border-bottom: 1px solid #d2d5d9; flex: none; padding-bottom: 1px; }
.tg { height: 25px; border-right: 1px solid #dddfe1; display: flex; align-items: center; flex: none; }
.ic { width: 24px; height: 24px; }
.ct { width: 12px; height: 8px; color: #666; }
.ct.dim { color: #a3a3a3; }
.ga { width: 81px; padding-left: 24px; gap: 5px; }
.gb { width: 99px; padding-left: 18px; gap: 18px; }
.zoomv { width: 34px; font-size: 16.5px; letter-spacing: -0.3px; padding-top: 5px; }
.gc { width: 90px; padding-left: 15px; gap: 13px; }
.gd { width: 90px; padding-left: 14px; gap: 14px; }
.ge { width: 53px; padding-left: 16px; }
.gf { width: 91px; padding-left: 15px; gap: 13px; }
.gg { width: 127px; padding-left: 14px; gap: 13px; }
.gh { width: 125px; padding-left: 14px; gap: 4px; }
.wp { margin-left: 12px; }
.gi { width: 71px; padding-left: 13px; gap: 5px; }
.gj { width: 60px; padding-left: 11px; gap: 5px; border: 0; }
.tgr { flex: 1; display: flex; justify-content: flex-end; align-items: center; gap: 10.5px; padding-right: 21px; }

.body { flex: 1; display: flex; min-height: 0; }

/* Shapes panel */
.shapes { position: relative; width: 264px; border-right: 1px solid #d6d8dc; display: flex; flex-direction: column; }
.shapes-scroll { width: 251px; height: 720px; }
.searchrow { height: 75px; padding: 17px 0 0 8px; border-bottom: 1px solid #dfe1e3; }
.searchbox { width: 233px; height: 34px; background: #fff; border: 1px solid #d2d4d6; border-radius: 4px; display: flex; align-items: center; justify-content: space-between; padding: 0 5px 0 7px; font: 15px "Liberation Sans", Arial, sans-serif; color: #757575; }
.searchbox span { padding-top: 1px; }
.sec { height: 44px; border-bottom: 1px solid #dfe1e3; display: flex; align-items: center; padding-left: 4px; }
.sec.gen { height: 43px; }
.tri { color: #999; margin: -4px 7px 0 0; }
.tri.side { margin: -7px 9px 0 4px; }
.sec-t { font-size: 15.2px; font-weight: 500; -webkit-text-stroke: .3px #111; }
.gen .sec-t, .shut + .shut .sec-t { padding-top: 2px; }
.sec-tools { flex: 1; display: flex; align-items: center; justify-content: flex-end; gap: 12px; padding-right: 16px; color: #999; }
.sec-tools svg { fill: none; stroke: #777; stroke-width: 1.5; }
.sec-tools b { font-size: 14.5px; font-weight: 600; margin-right: -4px; }
.dragwrap { height: 72px; padding: 15px 0 0 18px; border-bottom: 1px solid #dfe1e3; }
.drag { width: 218px; height: 41px; border: 2px dotted #b4b4b4; border-radius: 14px; display: grid; place-items: center; font-size: 15.3px; color: #9a9a9a; }
.palette { height: 399px; padding: 8px 0 0 11px; border-bottom: 1px solid #dfe1e3; display: grid; grid-template-columns: repeat(5, 45px); grid-auto-rows: 42.5px; }
.palette svg { width: 45px; height: 42px; fill: none; stroke: #000; stroke-width: 1.4; }
.palette text { stroke: none; fill: #333; }
.t7 { font: 7.5px "Open Sans", sans-serif; }
.t5 { font: 700 5px "Open Sans", sans-serif; }
.palette .li { fill: #345; font: 600 5.2px "Open Sans", sans-serif; }
.palette .greek { stroke: #999; stroke-width: .8; stroke-dasharray: 3 .7 2 .6; }
.shut + .shut { height: 43px; }
.more { flex: 1; border-top: 1px solid #d2d5d9; padding: 14px 0 0 58px; }
.morebtn { width: 145px; height: 37px; border: 1px solid #2f7be0; border-radius: 4px; background: linear-gradient(#4d90fe, #4787ed); color: #fff; display: flex; align-items: center; justify-content: center; gap: 6px; font: 17.5px "Liberation Sans", Arial, sans-serif; white-space: nowrap; }
.vbar { position: absolute; left: 254px; top: 3px; width: 6px; height: 548px; border-radius: 3px; background: #d6d8da; }

/* Drawing area */
.center { width: 1299px; display: flex; flex-direction: column; border-right: 1px solid #d6d8dc; }
.canvas { position: relative; height: 740px; background: #fbfbfb; flex: none; }
.cv { position: absolute; right: 2px; top: 201px; width: 6px; height: 207px; border-radius: 3px; background: #dfdfdf; }
.ch { position: absolute; left: 385px; top: 732px; width: 487px; height: 6px; border-radius: 3px; background: #dfdfdf; }
.node > * { fill: #fff; stroke: #111; stroke-width: 1; }
.edge > * { fill: none; stroke: #000; stroke-width: 1.1; marker-end: url(#arrow); }
.label text { font: 12px "Liberation Sans", Arial, sans-serif; text-anchor: middle; fill: #000; }
.pages { flex: 1; display: flex; align-items: stretch; border-top: 1px solid #d6d8dc; }
.pdots { width: 39px; border-right: 1px solid #d6d8dc; display: grid; place-items: center; }
.ptab { width: 91px; background: #fff; border-right: 1px solid #d6d8dc; display: flex; align-items: center; justify-content: center; gap: 8px; font-size: 14.8px; letter-spacing: -0.1px; color: #666; }
.padd { margin: 12px 0 0 7px; color: #777; stroke-width: 2.2; }

/* Format panel */
.format { width: 300px; color: #606164; font-size: 14.6px; letter-spacing: -0.2px; }
.ftabs { display: flex; height: 42px; font-weight: 700; font-size: 15.2px; }
.ft { display: grid; place-items: center; padding-top: 4px; }
.ft.on { width: 133px; }
.ft.st { width: 134px; background: #e3e3e3; border: 1px solid #d6d8dc; border-top: 0; padding-top: 2px; }
.ft.x { flex: 1; background: #e3e3e3; border-bottom: 1px solid #d6d8dc; padding-top: 0; padding-bottom: 3px; }
.fs { border-bottom: 1px solid #d6d8dc; padding-left: 18px; }
h3 { margin: 0; font-size: 14.4px; line-height: 20px; font-weight: 700; letter-spacing: -0.1px; }
.view { height: 208px; padding-top: 20px; }
.opts { height: 143px; padding-top: 16px; }
.paper { height: 120px; padding-top: 16px; }
.data { height: 79px; padding-top: 15px; }
.row { display: flex; align-items: center; }
.cb { width: 15px; height: 15px; border: 1.5px solid #767676; border-radius: 3px; background: #fff; margin-right: 9px; flex: none; margin-top: -2px; }
.cb.on { border: 0; background: #0075ff; }
.cb.on::before { content: ""; display: block; width: 5px; height: 9px; margin: 1.500px 0 0 5px; border: solid #fff; border-width: 0 2px 2px 0; transform: rotate(42deg); }
.lb { white-space: nowrap; padding-bottom: 2px; }
.grid-lb { width: 101px; padding-bottom: 0; }
.r30 { height: 30px; }
.view .r30 { margin-top: 9px; }
.r28 { height: 28px; }
.r32 { height: 31px; }
.r31 { height: 31px; }
.r28b { height: 28px; }
.opts .r30:nth-of-type(1) { margin-top: 7px; }
.ind { margin-left: 24px; width: 100px; }
.half { width: 106px; }
.num { width: 60px; height: 27px; background: #fff; border: 1px solid #d4d6d8; border-radius: 5px; text-align: right; padding-right: 3px; color: #000; font: 15px/26px "Liberation Sans", Arial, sans-serif; letter-spacing: 0; }
.step { width: 15px; height: 25px; border: 1px solid #d0d2d5; border-radius: 4px; margin-left: 1px; display: flex; flex-direction: column; justify-content: space-around; align-items: center; }
.color { width: 56px; height: 28px; margin-left: 4px; background: #eee; border: 1px solid #d4d6d8; border-radius: 5px; display: flex; align-items: center; gap: 4px; padding-left: 3px; }
.color i { width: 29px; height: 17px; background: #cfcfcf; border: 1px solid #000; }
.btn { background: #eee; border: 1px solid #d6d8da; border-radius: 5px; color: #000; text-align: center; font: 15px/25px "Liberation Sans", Arial, sans-serif; letter-spacing: 0; }
.change { width: 138px; height: 27px; }
.wide { display: block; width: 262px; height: 24px; line-height: 22px; margin-bottom: 2px; }
.wide + .wide { line-height: 24px; }
.select { width: 257px; height: 26px; margin-top: 7px; background: #eee; border: 1px solid #d6d8da; border-radius: 5px; display: flex; align-items: center; justify-content: space-between; padding: 0 5px 0 7px; color: #000; font: 15px "Liberation Sans", Arial, sans-serif; letter-spacing: 0; }
.radios { display: flex; height: 24px; margin: 14px 0 0 11px; }
.rd { width: 15px; height: 15px; border: 1.5px solid #767676; border-radius: 50%; background: #fff; margin-right: 9px; }
.rd.on { border-color: #0075ff; background: radial-gradient(#0075ff 4.200px, #fff 4.800px); }
.radios span { width: 61px; line-height: 20px; }

/* Taskbar */
.taskbar { height: 60px; border-top: 1px solid #b4b9c9; background: linear-gradient(90deg, #e6ebfa, #e1edfc 28%, #e0e8fa 50%, #e6e5f8 70%, #e0ecfc 88%, #e5e8fa); display: flex; align-items: center; flex: none; font-size: 14px; }
.weather { width: 502px; padding-left: 24px; display: flex; align-items: center; gap: 6px; }
.weather svg { margin-top: -12px; }
.wtext { display: flex; flex-direction: column; line-height: 20px; font-size: 14.4px; letter-spacing: -0.2px; padding-bottom: 3px; }
.dim2 { color: #5d6270; }
.badge { font: 13px "Open Sans", sans-serif; fill: #fff; }
.tsearch { margin-left: 18px; width: 273px; height: 40px; border-radius: 20px; border: 1px solid #cdd5e8; background: #f7f9fe; display: flex; align-items: center; gap: 11px; padding-left: 12px; font-size: 16.400px; color: #5b5d62; }
.apps { margin-left: 3px; display: flex; height: 59px; }
.apps > div { position: relative; width: 55px; display: grid; place-items: center; }
.run::after { content: ""; position: absolute; bottom: 5px; left: 24px; width: 8px; height: 4px; border-radius: 2px; background: #858a94; }
.cur { background: linear-gradient(#f3f6fd, #f3f6fd) 3px 5px / 48px 49px no-repeat; }
.cur::after { width: 20px; left: 17px; background: #0a6fd0; bottom: 4px; }
.who { position: absolute; left: 28px; top: 8px; }
.zicon { overflow: visible; }
.pre { font: 800 7.500px "Open Sans", sans-serif; fill: #222; }
.dev { font: 800 12px "Open Sans", sans-serif; fill: #fff; }
.cpp { font: 800 14px "Open Sans", sans-serif; fill: #0a1e66; }
.zalo-t { font: 700 11px "Open Sans", sans-serif; fill: #0a6ce0; }
.tray { flex: 1; display: flex; align-items: center; justify-content: flex-end; padding-right: 27px; }
.tray > * { margin-left: 10px; }
.tray > svg:nth-child(2) { margin-left: 22px; }
.tray .vie { margin-left: 25px; width: 23px; font-size: 14px; letter-spacing: -0.1px; padding-bottom: 1px; }
.tray > svg:nth-child(4) { margin-left: 26px; }
.clock { display: flex; flex-direction: column; align-items: flex-end; line-height: 20px; width: 79px; font-size: 14.600px; letter-spacing: -0.2px; padding-bottom: 2px; }
.tray .clock + svg { margin-left: 11px; }
```
